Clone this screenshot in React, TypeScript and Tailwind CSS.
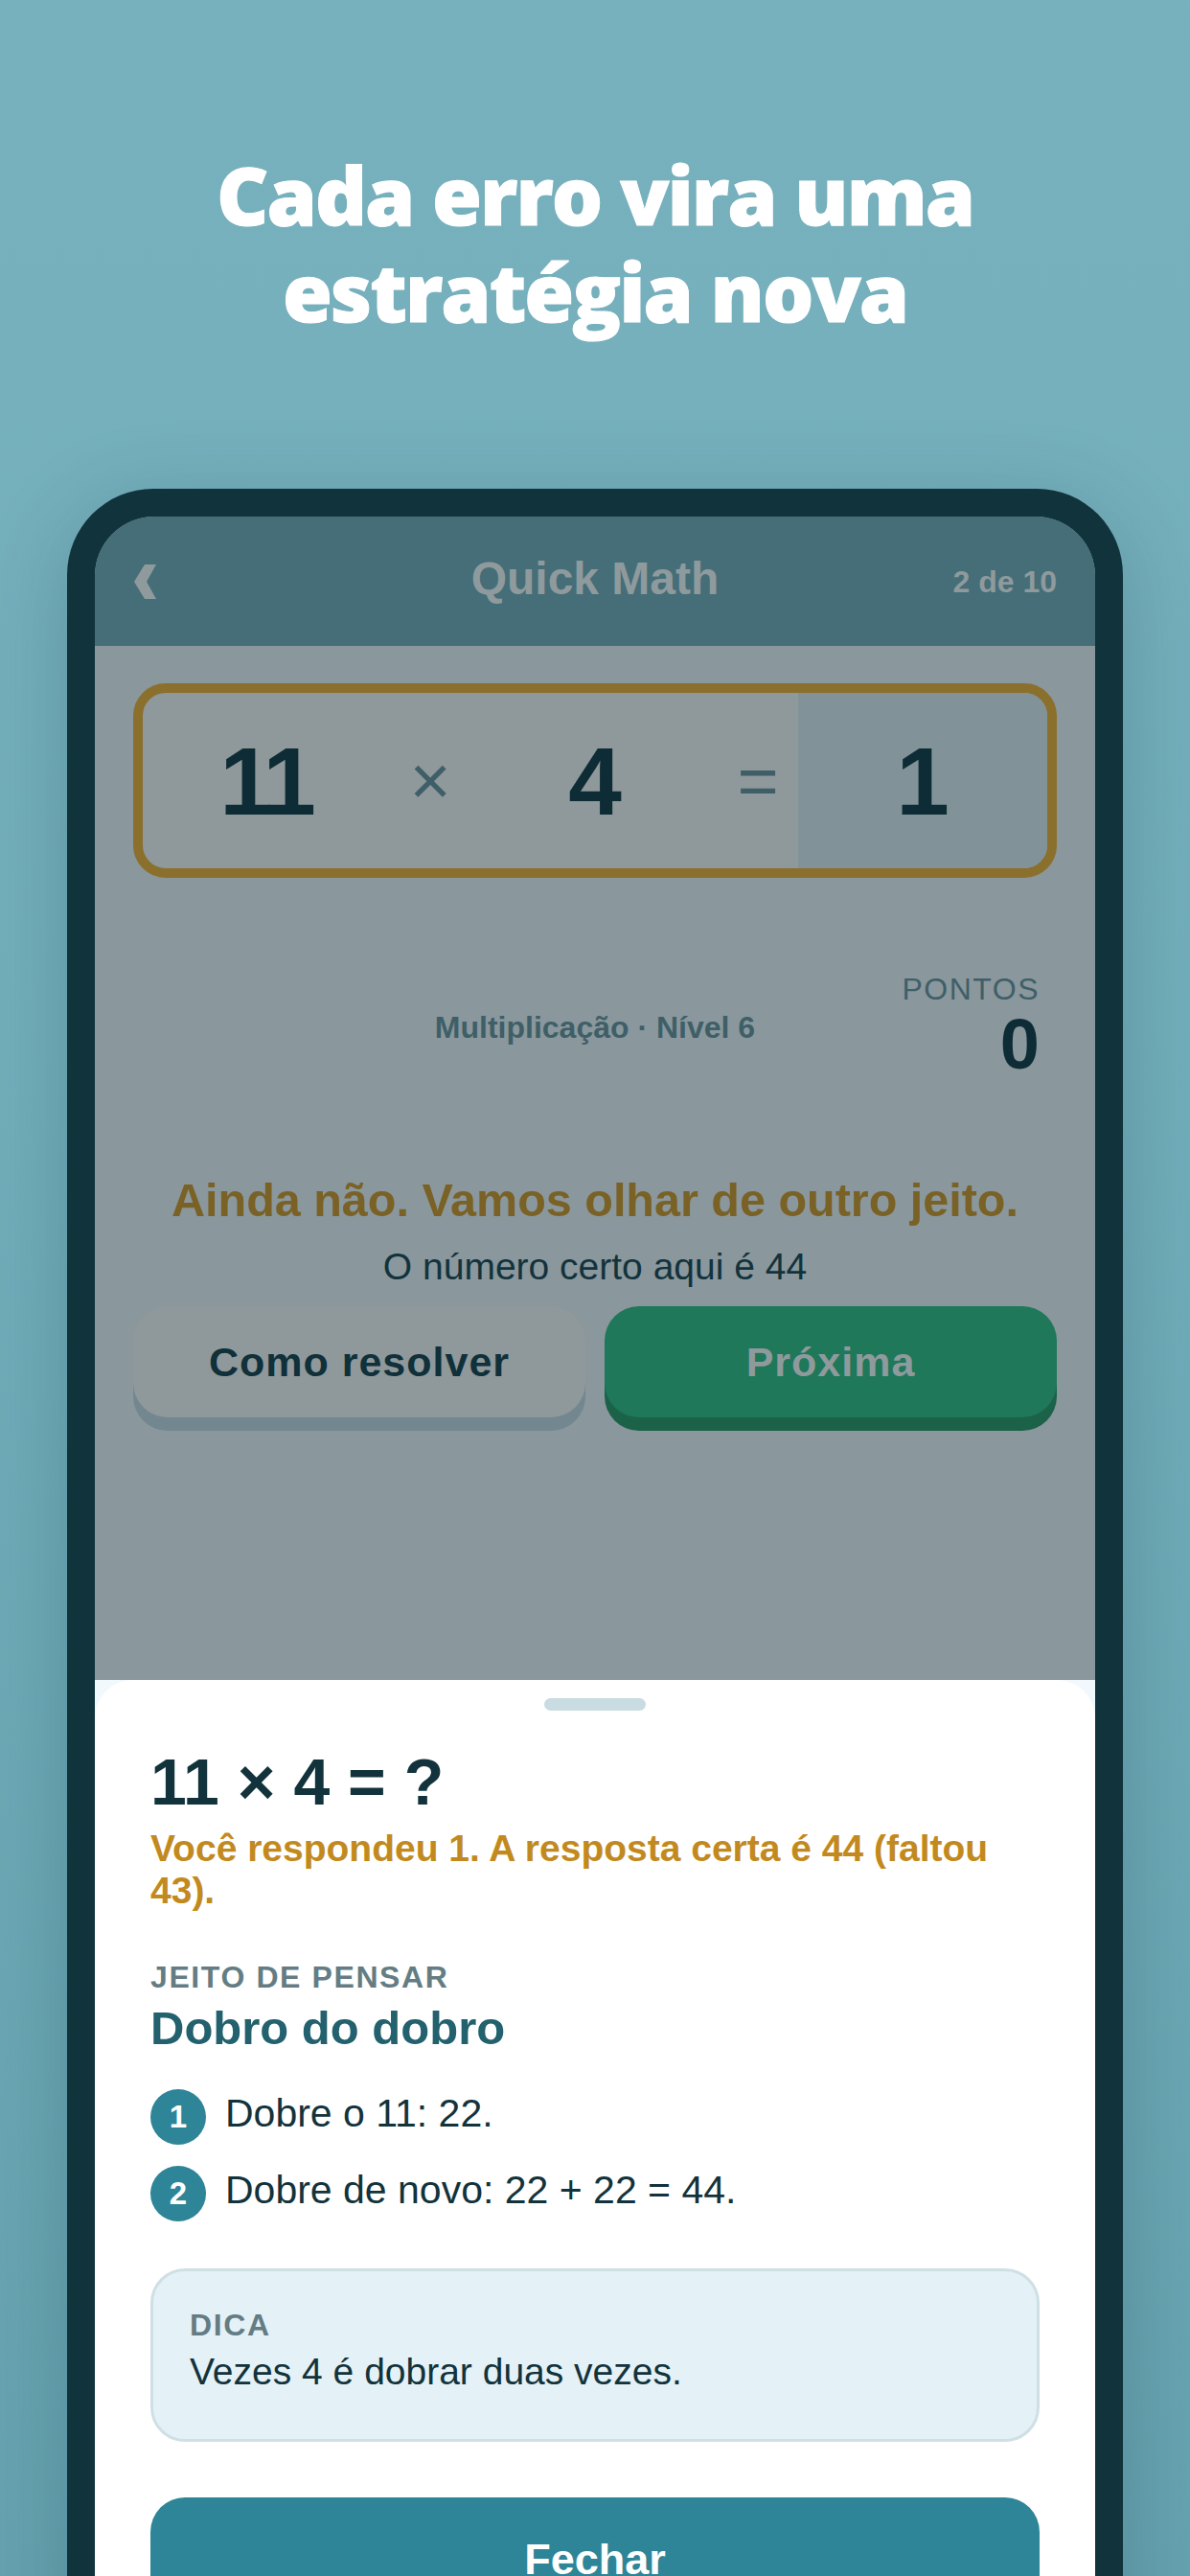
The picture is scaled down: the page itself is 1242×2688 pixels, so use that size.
const sans = "font-['Liberation_Sans',Arial,sans-serif]";

const Key = ({ children, cls }: { children: string; cls: string }) => (
  <div className={`rounded-[36px] w-[473px] h-[116px] flex items-center justify-center text-[43px] font-bold tracking-[1px] ${cls}`}>
    {children}
  </div>
);

const Step = ({ n, text }: { n: number; text: string }) => (
  <div className="flex gap-5 items-start">
    <div className="w-[58px] h-[58px] rounded-full bg-[#2e8597] text-white text-[33px] font-bold flex items-center justify-center shrink-0">
      {n}
    </div>
    <p className="text-[41px] leading-[50px] text-[#12333c]">{text}</p>
  </div>
);

export default function App() {
  return (
    <div className={`${sans} w-[1242px] h-[2688px] overflow-hidden bg-[linear-gradient(180deg,#78b1be_0%,#72aebb_40%,#66a2b0_100%)]`}>
      <div className="pt-[152px] h-[510px] text-center text-white font-['Open_Sans',sans-serif] font-extrabold text-[84px] leading-[101px] tracking-[-2px] [-webkit-text-stroke:1px_white]">
        <p>Cada erro vira uma</p>
        <p>estratégia nova</p>
      </div>

      <div className="mx-[70px] h-[2300px] rounded-[90px] bg-[#10333c] p-[29px] shadow-[0_20px_90px_rgba(16,51,60,0.22)]">
        <div className="relative h-full rounded-[62px] overflow-hidden bg-[#8a979c]">
          <div className="h-[135px] bg-[#456e78] flex items-center justify-between pl-[41px] pr-10 relative">
            <svg width="23" height="36" viewBox="0 0 23 36">
              <path d="M23 0 H11 L0 18 L11 36 H23 L13 18 Z" fill="#8f9a9d" />
            </svg>
            <span className="absolute inset-x-0 pb-[6px] text-center text-[48px] font-bold text-[#8f9a9d]">Quick Math</span>
            <span className="text-[32px] font-bold text-[#8f9a9d]">2 de 10</span>
          </div>

          <div className="px-10 pt-[39px]">
            <div className="h-[203px] rounded-[34px] border-[10px] border-[#8b6f2d] bg-[#8f989a] overflow-hidden flex items-center text-[#0e2c35] text-[100px] font-bold">
              <div className="w-[256px] text-center tracking-[-5px]">11</div>
              <div className="w-[88px] text-center text-[74px] font-normal text-[#3f5f68]">×</div>
              <div className="w-[256px] text-center">4</div>
              <div className="w-[84px] text-center text-[74px] font-normal text-[#3f5f68]">=</div>
              <div className="flex-1 self-stretch bg-[#819398] flex items-center justify-center">1</div>
            </div>

            <div className="relative h-[172px] mt-[96px]">
              <p className="absolute inset-x-0 top-[36px] text-center text-[32px] font-bold text-[#3f5f68]">Multiplicação · Nível 6</p>
              <div className="absolute right-[18px] top-0 text-right">
                <p className="text-[32px] leading-[40px] tracking-[1.5px] text-[#3f5f68]">PONTOS</p>
                <p className="text-[74px] leading-[76px] font-bold text-[#0e2c35]">0</p>
              </div>
            </div>

            <p className="mt-[32px] text-center text-[48.5px] font-bold text-[#7a6226]">Ainda não. Vamos olhar de outro jeito.</p>
            <p className="mt-[4px] text-center text-[39px] text-[#12333c]">O número certo aqui é 44</p>

            <div className="mt-[12px] flex gap-5">
              <Key cls="bg-[#8f989a] shadow-[0_14px_0_#728790] text-[#10303a]">Como resolver</Key>
              <Key cls="bg-[#1e7859] shadow-[0_14px_0_#1b6249] text-[#8f9a9d]">Próxima</Key>
            </div>
          </div>

          <div className="absolute left-0 right-0 top-[1214px] bg-[#f2f9fc]">
            <div className="bg-white rounded-t-[40px] h-[1200px] px-[58px] pt-[19px]">
              <div className="mx-auto w-[106px] h-[13px] rounded-full bg-[#c8dce2]" />
              <h2 className="mt-[32px] text-[68px] leading-[84px] font-bold text-[#12333c]">11 × 4 = ?</h2>
              <p className="mt-[6px] text-[39px] leading-[44px] font-bold text-[#c28a1e]">
                Você respondeu 1. A resposta certa é 44 (faltou 43).
              </p>
              <p className="mt-[48px] text-[32px] leading-[40px] font-bold tracking-[1.6px] text-[#647d84]">JEITO DE PENSAR</p>
              <h3 className="mt-[3px] text-[49px] leading-[60px] font-bold text-[#22616d]">Dobro do dobro</h3>
              <div className="mt-[34px] flex flex-col gap-[22px]">
                <Step n={1} text="Dobre o 11: 22." />
                <Step n={2} text="Dobre de novo: 22 + 22 = 44." />
              </div>
              <div className="mt-[49px] h-[181px] rounded-[36px] border-[3px] border-[#cfe0e5] bg-[#e4f1f6] px-[38px] pt-[36px]">
                <p className="text-[32px] leading-[40px] font-bold tracking-[1.6px] text-[#647d84]">DICA</p>
                <p className="mt-[4px] text-[39px] leading-[50px] text-[#12333c]">Vezes 4 é dobrar duas vezes.</p>
              </div>
              <div className="mt-[58px] h-[130px] rounded-[36px] bg-[#2e8597] flex items-center justify-center text-white text-[45px] font-bold">
                Fechar
              </div>
            </div>
          </div>
        </div>
      </div>
    </div>
  );
}
